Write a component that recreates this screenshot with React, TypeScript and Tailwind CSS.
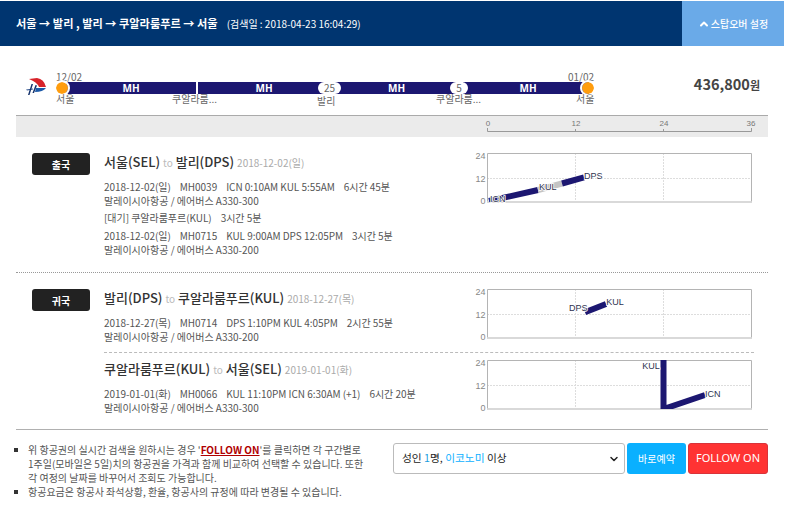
import { ChevronDown, ChevronUp } from "lucide-react";

const kr = "font-['Noto_Sans_CJK_KR','Noto_Sans',sans-serif]";
const navy = "#1c1771";

function Logo() {
  return (
    <svg width="21" height="17" viewBox="0 0 21 17" className="shrink-0">
      <path d="M4 1 L12 0 Q19 1 21 9 L14 9 Q12 4 4 1Z" fill="#d8232a" />
      <path d="M11 10 L21 10 Q18 14 10 14Z" fill="#1c5aa8" />
      <path d="M1 11.5 L8 10.5 L8 11.5 L2 12.5Z" fill="#3a5c94" />
      <path d="M6.5 6 L8 6 L4.5 17 L3 17Z" fill="#12306b" />
      <path d="M10.5 7 L12 7.5 L9 15 L7.5 15Z" fill="#12306b" />
    </svg>
  );
}

function Segment({ className }: { className: string }) {
  return (
    <div
      className={
        "flex h-3 items-center justify-center bg-[#1c1771] text-[10px] font-bold text-white font-['Noto_Sans','Liberation_Sans',sans-serif] " +
        className
      }
    >
      MH
    </div>
  );
}

function Timeline() {
  return (
    <div className="flex items-start pl-[25px] pr-6 pt-[25px]">
      <div className="mt-[7px] w-[31px] shrink-0">
        <Logo />
      </div>
      <div className={"w-[538px] shrink-0 text-[10px] leading-[12px] text-[#666] " + kr}>
        <div className="flex justify-between">
          <span>12/02</span>
          <span>01/02</span>
        </div>
        <div className="relative -mt-px flex pl-[10px]">
          <Segment className="w-[130px]" />
          <div className="w-[2px]" />
          <Segment className="w-[132px]" />
          <Segment className="ml-px w-[131px]" />
          <Segment className="ml-px w-[126px] pl-1" />
          <span className="absolute left-0 top-0 h-3 w-3 rounded-full bg-[#ff9d0e] outline-2 outline-white" />
          <span className="absolute right-0 top-0 h-3 w-3 rounded-full bg-[#ff9d0e] outline-2 outline-white" />
          <span className="absolute left-[262px] top-0 flex h-3 w-[23px] items-center justify-center rounded-full bg-white">
            25
          </span>
          <span className="absolute left-[394px] top-0 flex h-3 w-[18px] items-center justify-center rounded-full bg-white">
            5
          </span>
        </div>
        <div className="relative -mt-px h-3 whitespace-nowrap">
          <span className="absolute left-0 top-0">서울</span>
          <span className="absolute left-[116px] top-0">쿠알라룸...</span>
          <span className="absolute left-[261px] top-[2px]">발리</span>
          <span className="absolute left-[380px] top-0">쿠알라룸...</span>
          <span className="absolute left-[520px] top-0">서울</span>
        </div>
      </div>
      <div className={"ml-auto mt-[3px] text-[14.5px] font-bold leading-5 text-[#444] " + kr}>
        436,800<span className="text-[11px]">원</span>
      </div>
    </div>
  );
}

function Scale() {
  return (
    <div className="mx-4 mt-[10px] flex h-[22px] justify-end border-t border-[#aaa] bg-[#ebebeb] pr-[12px]">
      <svg width="272" height="20">
        <g fontSize="8" textAnchor="middle" fill="#777" fontFamily="Liberation Sans">
          <text x="4" y="10">0</text>
          <text x="92" y="10">12</text>
          <text x="180" y="10">24</text>
          <text x="267" y="10">36</text>
        </g>
        <path d="M3.5 12V15.5H267.5V12M91.5 13V15.5M179.5 13V15.5" stroke="#999" fill="none" />
      </svg>
    </div>
  );
}

type Mark = { x: number; y: number; t: string };

function Chart({
  lines,
  marks,
  id,
}: {
  lines: { d: string; c: string }[];
  marks: Mark[];
  id: string;
}) {
  return (
    <svg width="284" height="54" className="block shrink-0 overflow-visible">
      <defs>
        <clipPath id={id}>
          <rect x="17" y="1" width="265" height="49" />
        </clipPath>
      </defs>
      <path d="M105.5 1V49M193.5 1V49M17 26.5H281" stroke="#ddd" strokeDasharray="2 1" fill="none" />
      <path d="M17.5 49.5V1.5H281.5V49.5" stroke="#b4b4b4" fill="none" />
      <path d="M17 50H282" stroke="#ccc" strokeWidth="1.5" fill="none" />
      <g clipPath={`url(#${id})`}>
        {lines.map((l) => (
          <path key={l.d} d={l.d} stroke={l.c} strokeWidth="6" fill="none" />
        ))}
      </g>
      {marks.map((m) => (
        <text
          key={m.t}
          x={m.x}
          y={m.y}
          fontSize="9"
          fill="#2f3350"
          stroke="#fff"
          strokeWidth="1.5"
          paintOrder="stroke"
          fontFamily="Liberation Sans"
        >
          {m.t}
        </text>
      ))}
      <g fontSize="9" fill="#888" fontFamily="Liberation Sans" textAnchor="end">
        <text x="15.5" y="7">24</text>
        <text x="15.5" y="29.5">12</text>
        <text x="15.5" y="52">0</text>
      </g>
    </svg>
  );
}

function Detail({ parts }: { parts: string[] }) {
  return (
    <div className="flex gap-[9px] whitespace-nowrap text-[10px] leading-[14px] tracking-[-0.04px] text-[#555]">
      {parts.map((p) => (
        <span key={p}>{p}</span>
      ))}
    </div>
  );
}

function Title({ from, to, date }: { from: string; to: string; date: string }) {
  return (
    <div className="mb-[7px] whitespace-nowrap text-[13px] font-medium leading-5 text-[#333]">
      {from} <span className="text-[10px] font-normal text-[#bbb]">to</span> {to}{" "}
      <span className="text-[10px] font-normal text-[#aaa]">{date}</span>
    </div>
  );
}

function Plane({ text }: { text: string }) {
  return <div className="text-[10px] leading-[14px] text-[#555]">{text}</div>;
}

function Badge({ children }: { children: string }) {
  return (
    <div className="flex h-[22px] w-[58px] items-center justify-center rounded-[3px] bg-[#222] text-[10px] font-bold text-white">
      {children}
    </div>
  );
}

function Notes() {
  return (
    <ul className="w-[377px] shrink-0 break-keep pr-[28px] text-[10px] leading-[14px] text-[#555]">
      <li className="flex">
        <span className="-ml-[2px] mr-[10px] mt-[5px] h-1 w-1 shrink-0 bg-[#333]" />
        <span>
          위 항공권의 실시간 검색을 원하시는 경우 '
          <span className="font-bold text-[#b00000] underline">FOLLOW ON</span>'를 클릭하면 각 구간별로 1주일(모바일은 5일)치의 항공권을 가격과 함께 비교하여 선택할 수 있습니다. 또한 각 여정의 날짜를 바꾸어서 조회도 가능합니다.
        </span>
      </li>
      <li className="flex whitespace-nowrap">
        <span className="-ml-[2px] mr-[10px] mt-[5px] h-1 w-1 shrink-0 bg-[#333]" />
        <span>항공요금은 항공사 좌석상황, 환율, 항공사의 규정에 따라 변경될 수 있습니다.</span>
      </li>
    </ul>
  );
}

function Actions() {
  return (
    <div className="flex h-[31px] flex-1 gap-[2px]">
      <div className="flex w-[232px] items-center justify-between rounded-[3px] border border-[#bbb] bg-white pl-2 pr-[4px] text-[10.7px] text-[#222]">
        <span>
          성인 <span className="text-[#1a9ee0]">1</span>명, <span className="text-[#0ab0ff]">이코노미</span> 이상
        </span>
        <ChevronDown size={12} strokeWidth={3} />
      </div>
      <button className="w-[59px] rounded-[3px] bg-[#0ab0ff] text-[10px] text-white">바로예약</button>
      <button className="flex-1 rounded-[3px] border border-[#d9333a] bg-[#ff3333] font-['Noto_Sans',sans-serif] text-[11px] text-white">
        FOLLOW ON
      </button>
    </div>
  );
}

export default function App() {
  return (
    <div className={"h-[523px] w-[786px] overflow-hidden bg-white " + kr}>
      <div className="w-[784px]">
        <div className="mt-px flex h-[45px] bg-[#003570]">
          <div className="flex flex-1 items-center whitespace-nowrap pl-4 text-[11.2px] font-bold text-white">
            서울 → 발리 , 발리 → 쿠알라룸푸르 → 서울
            <span className="ml-[9px] text-[10px] font-normal">(검색일 : 2018-04-23 16:04:29)</span>
          </div>
          <div className="flex w-[102px] items-center justify-center gap-px bg-[#6aaae8] text-[10px] font-medium text-white">
            <ChevronUp size={12} strokeWidth={4} />
            스탑오버 설정
          </div>
        </div>

        <Timeline />
        <Scale />

        <div className="mx-4 flex h-[136px] border-b border-dotted border-[#999] pl-4 pr-[14px] pt-4">
          <div className="w-[72px] shrink-0">
            <Badge>출국</Badge>
          </div>
          <div className="-mt-px flex flex-1 justify-between">
            <div>
              <Title from="서울(SEL)" to="발리(DPS)" date="2018-12-02(일)" />
              <Detail parts={["2018-12-02(일)", "MH0039", "ICN 0:10AM KUL 5:55AM", "6시간 45분"]} />
              <Plane text="말레이시아항공 / 에어버스 A330-300" />
              <div className="mb-1 mt-[3px]">
                <Detail parts={["[대기] 쿠알라룸푸르(KUL)", "3시간 5분"]} />
              </div>
              <Detail parts={["2018-12-02(일)", "MH0715", "KUL 9:00AM DPS 12:05PM", "3시간 5분"]} />
              <Plane text="말레이시아항공 / 에어버스 A330-200" />
            </div>
            <Chart
              id="c1"
              lines={[
                { d: "M19 49L68 38", c: navy },
                { d: "M68 38L92 31.5", c: "#c4c4c4" },
                { d: "M92 31.5L114 25.3", c: navy },
              ]}
              marks={[
                { x: 20, y: 49.5, t: "ICN" },
                { x: 69, y: 38, t: "KUL" },
                { x: 114, y: 26.5, t: "DPS" },
              ]}
            />
          </div>
        </div>

        <div className="mx-4 flex h-[157px] border-b border-[#b0b0b0] pl-4 pr-[14px] pt-4">
          <div className="w-[72px] shrink-0">
            <Badge>귀국</Badge>
          </div>
          <div className="-mt-px flex-1">
            <div className="flex h-[65px] justify-between border-b border-dashed border-[#bbb]">
              <div>
                <Title from="발리(DPS)" to="쿠알라룸푸르(KUL)" date="2018-12-27(목)" />
                <Detail parts={["2018-12-27(목)", "MH0714", "DPS 1:10PM KUL 4:05PM", "2시간 55분"]} />
                <Plane text="말레이시아항공 / 에어버스 A330-200" />
              </div>
              <Chart
                id="c2"
                lines={[{ d: "M115 24.3L136 16", c: navy }]}
                marks={[
                  { x: 99, y: 22.8, t: "DPS" },
                  { x: 136.3, y: 16.8, t: "KUL" },
                ]}
              />
            </div>
            <div className="flex justify-between pt-[6px]">
              <div>
                <Title from="쿠알라룸푸르(KUL)" to="서울(SEL)" date="2019-01-01(화)" />
                <Detail parts={["2019-01-01(화)", "MH0066", "KUL 11:10PM ICN 6:30AM (+1)", "6시간 20분"]} />
                <Plane text="말레이시아항공 / 에어버스 A330-300" />
              </div>
              <Chart
                id="c3"
                lines={[{ d: "M193.5 0V50L235 36", c: navy }]}
                marks={[
                  { x: 172.3, y: 9.8, t: "KUL" },
                  { x: 235, y: 37.8, t: "ICN" },
                ]}
              />
            </div>
          </div>
        </div>

        <div className="mx-4 mt-[13px] flex items-start">
          <Notes />
          <Actions />
        </div>
      </div>
    </div>
  );
}
